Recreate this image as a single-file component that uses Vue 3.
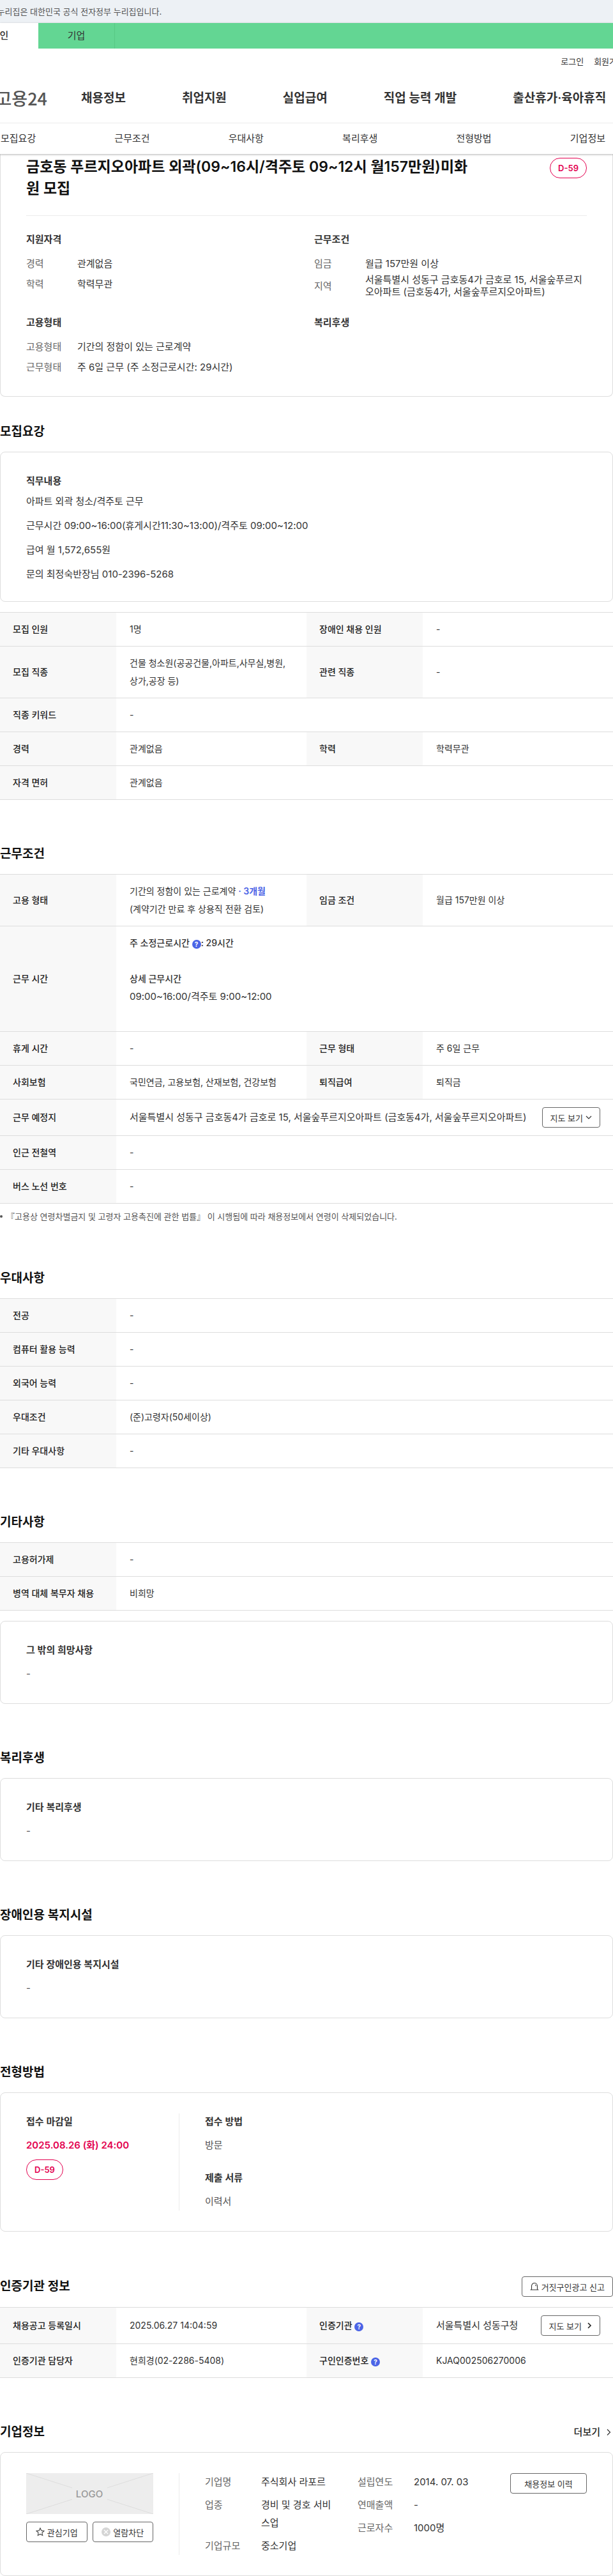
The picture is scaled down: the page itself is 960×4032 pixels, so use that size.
<template>
  <div class="page">
    <!-- 상단 안내 -->
    <div class="gov-bar">
      <p class="gov-text">이 누리집은 대한민국 공식 전자정부 누리집입니다.</p>
    </div>

    <header class="header">
      <div class="user-type">
        <a href="#" class="type-tab active">개인</a>
        <a href="#" class="type-tab">기업</a>
      </div>
      <div class="util">
        <a href="#">로그인</a>
        <a href="#">회원가입</a>
      </div>
      <div class="gnb">
        <a href="#" class="logo">고용24</a>
        <nav class="gnb-menu">
          <a v-for="menu in menus" :key="menu" href="#">{{ menu }}</a>
        </nav>
      </div>
      <nav class="anchor-tabs">
        <a v-for="tab in tabs" :key="tab" href="#">{{ tab }}</a>
      </nav>
    </header>

    <main>
      <!-- 공고 요약 -->
      <div class="summary">
        <div class="summary-head">
          <h1>금호동 푸르지오아파트 외곽(09~16시/격주토 09~12시 월157만원)미화원 모집</h1>
          <span class="d-day">D-59</span>
        </div>
        <div class="summary-grid">
          <div v-for="group in summary" :key="group.title">
            <h3 class="sub-title">{{ group.title }}</h3>
            <dl class="summary-list">
              <div v-for="item in group.items" :key="item.label" class="summary-row">
                <dt>{{ item.label }}</dt>
                <dd>{{ item.value }}</dd>
              </div>
            </dl>
          </div>
        </div>
      </div>

      <!-- 모집요강 -->
      <section class="section first">
        <h2>모집요강</h2>
        <div class="box">
          <h3 class="sub-title">직무내용</h3>
          <div class="job-desc">
            <p v-for="line in jobDesc" :key="line">{{ line }}</p>
          </div>
        </div>
        <table class="info-table spaced">
          <colgroup><col class="col-th"><col class="col-td"><col class="col-th"><col class="col-td"></colgroup>
          <tbody>
            <tr v-for="(row, i) in recruitRows" :key="i">
              <template v-for="cell in row" :key="cell.label">
                <th scope="row">{{ cell.label }}</th>
                <td :colspan="row.length === 1 ? 3 : 1">{{ cell.value }}</td>
              </template>
            </tr>
          </tbody>
        </table>
      </section>

      <!-- 근무조건 -->
      <section class="section">
        <h2>근무조건</h2>
        <table class="info-table">
          <colgroup><col class="col-th"><col class="col-td"><col class="col-th"><col class="col-td"></colgroup>
          <tbody>
            <tr>
              <th scope="row">고용 형태</th>
              <td>기간의 정함이 있는 근로계약 <em class="period">· 3개월</em><br>(계약기간 만료 후 상용직 전환 검토)</td>
              <th scope="row">임금 조건</th>
              <td>월급 157만원 이상</td>
            </tr>
            <tr>
              <th scope="row">근무 시간</th>
              <td colspan="3">
                <p class="work-time"><strong>주 소정근로시간 <button type="button" class="help" aria-label="도움말">?</button>: 29시간</strong></p>
                <p><strong>상세 근무시간</strong></p>
                <p class="work-time large">09:00~16:00/격주토 9:00~12:00</p>
              </td>
            </tr>
            <tr>
              <th scope="row">휴게 시간</th>
              <td>-</td>
              <th scope="row">근무 형태</th>
              <td>주 6일 근무</td>
            </tr>
            <tr>
              <th scope="row">사회보험</th>
              <td>국민연금, 고용보험, 산재보험, 건강보험</td>
              <th scope="row">퇴직급여</th>
              <td>퇴직금</td>
            </tr>
            <tr>
              <th scope="row">근무 예정지</th>
              <td colspan="3">
                <div class="cell-flex">
                  <span class="large">서울특별시 성동구 금호동4가 금호로 15, 서울숲푸르지오아파트 (금호동4가, 서울숲푸르지오아파트)</span>
                  <button type="button" class="btn">
                    지도 보기
                    <svg width="10" height="10" viewBox="0 0 10 10"><path d="M1 3l4 4 4-4" fill="none" stroke="#333" stroke-width="1.2" /></svg>
                  </button>
                </div>
              </td>
            </tr>
            <tr>
              <th scope="row">인근 전철역</th>
              <td colspan="3">-</td>
            </tr>
            <tr>
              <th scope="row">버스 노선 번호</th>
              <td colspan="3">-</td>
            </tr>
          </tbody>
        </table>
        <p class="note">『고용상 연령차별금지 및 고령자 고용촉진에 관한 법률』 이 시행됨에 따라 채용정보에서 연령이 삭제되었습니다.</p>
      </section>

      <!-- 우대사항 -->
      <section class="section">
        <h2>우대사항</h2>
        <table class="info-table">
          <colgroup><col class="col-th"><col></colgroup>
          <tbody>
            <tr v-for="row in preferRows" :key="row.label">
              <th scope="row">{{ row.label }}</th>
              <td>{{ row.value }}</td>
            </tr>
          </tbody>
        </table>
      </section>

      <!-- 기타사항 -->
      <section class="section">
        <h2>기타사항</h2>
        <table class="info-table">
          <colgroup><col class="col-th"><col></colgroup>
          <tbody>
            <tr v-for="row in etcRows" :key="row.label">
              <th scope="row">{{ row.label }}</th>
              <td>{{ row.value }}</td>
            </tr>
          </tbody>
        </table>
        <div class="box spaced">
          <h3 class="sub-title">그 밖의 희망사항</h3>
          <p class="box-text">-</p>
        </div>
      </section>

      <section v-for="item in welfare" :key="item.title" class="section">
        <h2>{{ item.title }}</h2>
        <div class="box">
          <h3 class="sub-title">{{ item.label }}</h3>
          <p class="box-text">-</p>
        </div>
      </section>

      <!-- 전형방법 -->
      <section class="section">
        <h2>전형방법</h2>
        <div class="box split">
          <div class="split-left">
            <h3 class="sub-title">접수 마감일</h3>
            <p class="box-text deadline">2025.08.26 (화) 24:00</p>
            <span class="d-day">D-59</span>
          </div>
          <div class="split-right apply">
            <div>
              <h3 class="sub-title">접수 방법</h3>
              <p class="box-text">방문</p>
            </div>
            <div>
              <h3 class="sub-title">제출 서류</h3>
              <p class="box-text">이력서</p>
            </div>
          </div>
        </div>
      </section>

      <!-- 인증기관 정보 -->
      <section class="section">
        <div class="section-head">
          <h2>인증기관 정보</h2>
          <button type="button" class="btn">
            <svg width="14" height="14" viewBox="0 0 14 14"><path d="M2.500 11.500V6a4.500 4.500 0 0 1 9 0v5.500M0.500 12h13M8 4.200c1 .3 1.500 1 1.500 2" fill="none" stroke="#333" stroke-width="1.1" /></svg>
            거짓구인광고 신고
          </button>
        </div>
        <table class="info-table">
          <colgroup><col class="col-th"><col class="col-td"><col class="col-th"><col class="col-td"></colgroup>
          <tbody>
            <tr>
              <th scope="row">채용공고 등록일시</th>
              <td>2025.06.27 14:04:59</td>
              <th scope="row">인증기관 <button type="button" class="help" aria-label="도움말">?</button></th>
              <td>
                <div class="cell-flex">
                  <span class="large">서울특별시 성동구청</span>
                  <button type="button" class="btn wide">
                    지도 보기
                    <svg width="8" height="10" viewBox="0 0 8 10"><path d="M2 1l4 4-4 4" fill="none" stroke="#222" stroke-width="1.6" /></svg>
                  </button>
                </div>
              </td>
            </tr>
            <tr>
              <th scope="row">인증기관 담당자</th>
              <td>현희경(02-2286-5408)</td>
              <th scope="row">구인인증번호 <button type="button" class="help" aria-label="도움말">?</button></th>
              <td>KJAQ002506270006</td>
            </tr>
          </tbody>
        </table>
      </section>

      <!-- 기업정보 -->
      <section class="section">
        <div class="section-head">
          <h2>기업정보</h2>
          <a href="#" class="more">
            더보기
            <svg width="12" height="12" viewBox="0 0 12 12"><path d="M3 1.500l4.500 4.500L3 10.500" fill="none" stroke="#333" stroke-width="1.2" /></svg>
          </a>
        </div>
        <div class="box split">
          <div class="split-left">
            <svg class="company-logo" viewBox="0 0 199 64" preserveAspectRatio="none">
              <rect width="199" height="64" fill="#ededed" />
              <path d="M0 0l72 23M199 0l-72 23M0 64l72-23M199 64l-72-23" stroke="#ddd" />
              <text x="99" y="38" text-anchor="middle">LOGO</text>
            </svg>
            <div class="company-btns">
              <button type="button" class="btn">
                <svg width="14" height="14" viewBox="0 0 14 14"><path d="M7 1l1.800 3.900 4.200.5-3.100 2.900.8 4.200L7 10.400l-3.700 2.100.8-4.200L1 5.400l4.200-.5z" fill="none" stroke="#444" stroke-width="1.1" /></svg>
                관심기업
              </button>
              <button type="button" class="btn">
                <svg width="14" height="14" viewBox="0 0 14 14"><circle cx="7" cy="7" r="7" fill="#d5d5d5" /><path d="M4 4l6 6M10 4l-6 6" stroke="#fff" stroke-width="1.3" /></svg>
                열람차단
              </button>
            </div>
          </div>
          <div class="split-right company">
            <dl v-for="(col, i) in company" :key="i" class="company-list">
              <div v-for="item in col" :key="item.label" class="company-row">
                <dt>{{ item.label }}</dt>
                <dd>{{ item.value }}</dd>
              </div>
            </dl>
            <button type="button" class="btn">채용정보 이력</button>
          </div>
        </div>
      </section>
    </main>
  </div>
</template>

<script setup>
const menus = ['채용정보', '취업지원', '실업급여', '직업 능력 개발', '출산휴가·육아휴직'];
const tabs = ['모집요강', '근무조건', '우대사항', '복리후생', '전형방법', '기업정보'];

const summary = [
  {
    title: '지원자격',
    items: [
      { label: '경력', value: '관계없음' },
      { label: '학력', value: '학력무관' }
    ]
  },
  {
    title: '근무조건',
    items: [
      { label: '임금', value: '월급 157만원 이상' },
      { label: '지역', value: '서울특별시 성동구 금호동4가 금호로 15, 서울숲푸르지오아파트 (금호동4가, 서울숲푸르지오아파트)' }
    ]
  },
  {
    title: '고용형태',
    items: [
      { label: '고용형태', value: '기간의 정함이 있는 근로계약' },
      { label: '근무형태', value: '주 6일 근무 (주 소정근로시간: 29시간)' }
    ]
  },
  { title: '복리후생', items: [] }
];

const jobDesc = [
  '아파트 외곽 청소/격주토 근무',
  '근무시간 09:00~16:00(휴게시간11:30~13:00)/격주토 09:00~12:00',
  '급여 월 1,572,655원',
  '문의 최정숙반장님 010-2396-5268'
];

const recruitRows = [
  [{ label: '모집 인원', value: '1명' }, { label: '장애인 채용 인원', value: '-' }],
  [{ label: '모집 직종', value: '건물 청소원(공공건물,아파트,사무실,병원,상가,공장 등)' }, { label: '관련 직종', value: '-' }],
  [{ label: '직종 키워드', value: '-' }],
  [{ label: '경력', value: '관계없음' }, { label: '학력', value: '학력무관' }],
  [{ label: '자격 면허', value: '관계없음' }]
];

const preferRows = [
  { label: '전공', value: '-' },
  { label: '컴퓨터 활용 능력', value: '-' },
  { label: '외국어 능력', value: '-' },
  { label: '우대조건', value: '(준)고령자(50세이상)' },
  { label: '기타 우대사항', value: '-' }
];

const etcRows = [
  { label: '고용허가제', value: '-' },
  { label: '병역 대체 복무자 채용', value: '비희망' }
];

const welfare = [
  { title: '복리후생', label: '기타 복리후생' },
  { title: '장애인용 복지시설', label: '기타 장애인용 복지시설' }
];

const company = [
  [
    { label: '기업명', value: '주식회사 라포르' },
    { label: '업종', value: '경비 및 경호 서비스업' },
    { label: '기업규모', value: '중소기업' }
  ],
  [
    { label: '설립연도', value: '2014. 07. 03' },
    { label: '연매출액', value: '-' },
    { label: '근로자수', value: '1000명' }
  ]
];
</script>

<style>
body {
  margin: 0;
  background: #fff;
  overflow-x: hidden;
}
</style>

<style scoped>
.page {
  font-family: Inter, "Noto Sans CJK KR", sans-serif;
  font-size: 15px;
  line-height: 28px;
  color: #333;
  overflow: hidden;
}

h1, h2, h3, p, dl, dd {
  margin: 0;
}

a {
  color: inherit;
  text-decoration: none;
}

button {
  font-family: inherit;
  cursor: pointer;
}

/* 헤더 */
.gov-bar {
  height: 36px;
  background: #edf1f5;
}

.gov-text {
  margin-left: -20px;
  font-size: 13px;
  line-height: 36px;
  color: #555;
  white-space: nowrap;
}

.header {
  position: relative;
  background: #fff;
  box-shadow: 0 1px 3px rgba(0, 0, 0, 0.3);
}

.user-type {
  display: flex;
  height: 40px;
  margin-left: -60px;
  background: #63d693;
}

.type-tab {
  box-sizing: border-box;
  width: 120px;
  border-right: 1px solid #57c985;
  font-size: 15px;
  line-height: 40px;
  text-align: center;
}

.type-tab.active {
  background: #fff;
  border-color: #fff;
  font-weight: 500;
}

.util {
  display: flex;
  justify-content: flex-end;
  gap: 16px;
  margin-right: -18px;
  font-size: 13px;
  line-height: 40px;
}

.gnb {
  display: flex;
  align-items: center;
  height: 76px;
  border-bottom: 1px solid #ebebeb;
}

.logo {
  display: flex;
  justify-content: flex-end;
  flex: none;
  box-sizing: border-box;
  width: 127px;
  padding-right: 53px;
  font-family: "Noto Sans CJK KR", sans-serif;
  font-size: 27px;
  font-weight: 500;
  color: #555;
  white-space: nowrap;
}

.gnb-menu {
  display: flex;
  gap: 88px;
  font-size: 19px;
  font-weight: 600;
  white-space: nowrap;
}

.anchor-tabs {
  display: flex;
  justify-content: space-between;
  padding: 0 12px 0 1px;
  line-height: 48px;
}

/* 공고 요약 */
.summary {
  padding: 3px 40px 30px;
  border: 1px solid #ddd;
  border-top: 0;
  border-radius: 0 0 8px 8px;
}

.summary-head {
  display: flex;
  justify-content: space-between;
  align-items: flex-start;
  padding-bottom: 25px;
  border-bottom: 1px solid #ebebeb;
}

h1 {
  width: 80%;
  font-size: 23px;
  font-weight: 600;
  line-height: 34px;
  color: #111;
  word-break: break-all;
}

.d-day {
  box-sizing: border-box;
  display: inline-block;
  height: 32px;
  margin-top: 3px;
  padding: 0 12px;
  border: 1px solid #e3004f;
  border-radius: 16px;
  font-size: 13px;
  font-weight: 600;
  line-height: 30px;
  color: #e3004f;
}

.summary-grid {
  display: grid;
  grid-template-columns: 1fr 1fr;
  gap: 26px 24px;
  padding-top: 24px;
}

.sub-title {
  font-size: 15px;
  font-weight: 600;
  line-height: 26px;
  color: #333;
}

.summary-list {
  margin-top: 8px;
}

.summary-row {
  display: flex;
  align-items: center;
  min-height: 32px;
  line-height: 19px;
}

.summary-row dt {
  flex: none;
  width: 80px;
  color: #666;
}

/* 섹션 */
.section {
  padding-top: 70px;
}

.section.first {
  padding-top: 40px;
}

h2 {
  margin-bottom: 16px;
  font-size: 19px;
  font-weight: 600;
  line-height: 30px;
  color: #111;
}

.section-head {
  display: flex;
  justify-content: space-between;
  align-items: center;
  margin-bottom: 16px;
}

.section-head h2 {
  margin-bottom: 0;
}

.box {
  padding: 32px 40px;
  border: 1px solid #ddd;
  border-radius: 8px;
}

.spaced {
  margin-top: 16px;
}

.box-text {
  margin-top: 10px;
  color: #555;
}

.job-desc {
  display: grid;
  gap: 18px;
  margin-top: 9px;
  line-height: 20px;
}

/* 표 */
.info-table {
  width: 100%;
  table-layout: fixed;
  border-collapse: separate;
  border-spacing: 0;
  border-top: 1px solid #ddd;
  font-size: 14px;
}

.col-th {
  width: 182px;
}

.info-table th, .info-table td {
  padding: 12px 20px;
  border-bottom: 1px solid #ddd;
  text-align: left;
  vertical-align: middle;
}

.info-table th {
  padding-right: 8px;
  background: #f8f8f8;
  font-weight: 500;
  color: #222;
}

.info-table td {
  padding-left: 21px;
}

.period {
  font-style: normal;
  font-weight: 600;
  color: #4b64e6;
}

.work-time {
  margin-bottom: 28px;
}

.info-table strong {
  font-weight: 500;
}

.info-table .large {
  font-size: 15px;
}

.cell-flex {
  display: flex;
  justify-content: space-between;
  align-items: center;
  white-space: nowrap;
}

.help {
  width: 14px;
  height: 14px;
  padding: 0;
  border: 0;
  border-radius: 50%;
  background: #4b64e6;
  font-size: 10px;
  font-weight: 700;
  line-height: 14px;
  color: #fff;
  vertical-align: -1px;
}

.note {
  display: flex;
  align-items: center;
  gap: 6px;
  margin: 10px 0 2px;
  font-size: 13px;
  line-height: 20px;
  color: #555;
}

.note::before {
  content: "";
  width: 4px;
  height: 4px;
  border-radius: 50%;
  background: #555;
}

.btn {
  display: inline-flex;
  justify-content: center;
  align-items: center;
  gap: 4px;
  box-sizing: border-box;
  height: 32px;
  padding: 0 12px;
  border: 1px solid #666;
  border-radius: 4px;
  background: #fff;
  font-size: 13px;
  color: #333;
  white-space: nowrap;
}

.btn.wide {
  gap: 8px;
}

.more {
  display: flex;
  align-items: center;
  gap: 8px;
  font-weight: 500;
  color: #222;
}

/* 좌우 분할 박스 */
.split {
  display: flex;
}

.split-left {
  flex: none;
  width: 199px;
  padding-right: 40px;
}

.split-right {
  flex: 1;
  padding-left: 40px;
  border-left: 1px solid #ebebeb;
}

.deadline {
  font-weight: 600;
  color: #e3004f;
}

.split-left .d-day {
  margin-top: 8px;
}

.apply {
  display: grid;
  gap: 24px;
}

.company-logo {
  display: block;
  width: 100%;
  height: 64px;
}

.company-logo text {
  font-size: 15px;
  font-weight: 500;
  fill: #999;
}

.company-btns {
  display: grid;
  grid-template-columns: 1fr 1fr;
  gap: 8px;
  margin-top: 12px;
}

.company-btns .btn {
  padding: 0;
}

.company {
  display: grid;
  grid-template-columns: 1fr 1fr 120px;
  gap: 40px;
}

.company-list {
  display: flex;
  flex-direction: column;
  gap: 8px;
}

.company-row {
  display: flex;
}

.company-row dt {
  flex: none;
  width: 88px;
  color: #666;
}

.company-row dd {
  word-break: break-all;
}
</style>
